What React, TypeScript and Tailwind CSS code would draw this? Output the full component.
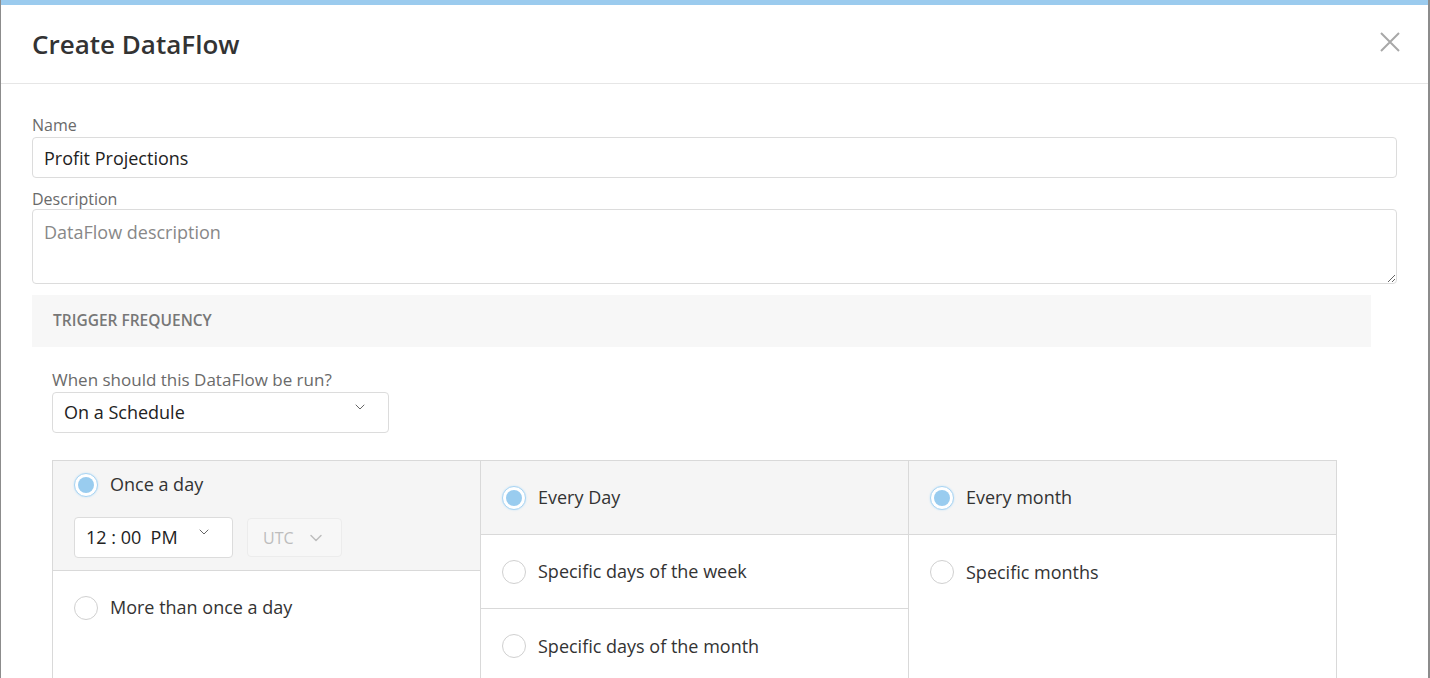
import { ChevronDown } from "lucide-react";

const Radio = ({ checked }: { checked?: boolean }) => (
    <span
        className={`flex h-6 w-6 shrink-0 items-center justify-center rounded-full border bg-white ${checked ? "border-[#a9d4f2] shadow-[0_0_2px_#bfe0f7]" : "border-[#d0d0d0]"}`}
    >
        {checked && <span className="h-4 w-4 rounded-full bg-[#99ccef]" />}
    </span>
);

const Option = ({ label, checked }: { label: string; checked?: boolean }) => (
    <label className="flex items-center gap-3 text-[18px] leading-[27px] text-[#333]">
        <Radio checked={checked} />
        <span>{label}</span>
    </label>
);

export default function App() {
    return (
        <div className="flex h-[678px] overflow-hidden bg-[#8c8c8c] pl-[1px] pr-[2px] font-['Open_Sans',sans-serif]">
            <div className="flex-1 border-t-[5px] border-[#9bcbee] bg-white">
                <header className="flex h-[79px] items-center justify-between border-b border-[#e6e6e6] pl-[31px] pr-[28px]">
                    <h1 className="text-[26px] font-semibold text-[#333]">Create DataFlow</h1>
                    <svg className="mb-1 h-5 w-5" viewBox="0 0 20 20" fill="none" stroke="#a8a8a8" strokeWidth="2">
                        <path d="M1 1 L19 19 M19 1 L1 19" />
                    </svg>
                </header>

                <div className="px-[31px] pt-[31px]">
                    <label className="block text-[16px] leading-5 text-[#6a6a6a]">Name</label>
                    <input
                        className="mt-[2px] block h-[41px] w-full rounded border border-[#dcdcdc] px-[11px] text-[18px] text-[#222] outline-none"
                        defaultValue="Profit Projections"
                    />
                    <label className="mt-[11px] block text-[16px] leading-5 text-[#6a6a6a]">Description</label>
                    <textarea
                        className="block h-[75px] w-full rounded border border-[#dcdcdc] px-[11px] py-[9px] text-[18px] text-[#222] outline-none placeholder:text-[#888]"
                        placeholder="DataFlow description"
                    />

                    <div className="mt-[11px] mr-[26px] flex h-[52px] items-center bg-[#f7f7f7] px-[21px] text-[15.5px] font-semibold text-[#777]">
                        TRIGGER FREQUENCY
                    </div>

                    <div className="pl-5 pr-[60px] pt-[22px]">
                        <label className="block text-[17px] leading-[22px] text-[#6a6a6a]">When should this DataFlow be run?</label>
                        <div className="mt-[1px] flex h-[41px] w-[337px] items-center justify-between rounded border border-[#dcdcdc] pl-[11px] pr-[20px] text-[18px] text-[#222]">
                            <span>On a Schedule</span>
                            <ChevronDown className="mb-3 h-4 w-4 text-[#666]" strokeWidth={1.5} />
                        </div>

                        <div className="mt-[27px] grid grid-cols-3 border-l border-t border-[#d9d9d9]">
                            <div className="border-r border-[#d9d9d9]">
                                <div className="h-[110px] border-b border-[#d9d9d9] bg-[#f5f5f5] px-[21px] pt-[10px]">
                                    <Option label="Once a day" checked />
                                    <div className="mt-[19px] flex items-center gap-[14px]">
                                        <div className="flex h-[41px] w-[159px] items-center justify-between rounded border border-[#dcdcdc] bg-white pl-[11px] pr-[20px] text-[18px] text-[#222]">
                                            <span>12 : 00&nbsp; PM</span>
                                            <ChevronDown className="mb-3 h-4 w-4 text-[#666]" strokeWidth={1.5} />
                                        </div>
                                        <div className="flex h-[39px] w-[95px] items-center gap-3 rounded border border-[#ececec] bg-[#f7f7f7] pl-[15px] text-[16px] text-[#bdbdbd]">
                                            <span>UTC</span>
                                            <ChevronDown className="h-5 w-5" strokeWidth={1.75} />
                                        </div>
                                    </div>
                                </div>
                                <div className="h-[120px] px-[21px] pt-[23px]">
                                    <Option label="More than once a day" />
                                </div>
                            </div>

                            <div className="border-r border-[#d9d9d9]">
                                <div className="flex h-[74px] items-center border-b border-[#d9d9d9] bg-[#f5f5f5] px-[21px]">
                                    <Option label="Every Day" checked />
                                </div>
                                <div className="flex h-[74px] items-center border-b border-[#d9d9d9] px-[21px]">
                                    <Option label="Specific days of the week" />
                                </div>
                                <div className="flex h-[74px] items-center px-[21px]">
                                    <Option label="Specific days of the month" />
                                </div>
                            </div>

                            <div className="border-r border-[#d9d9d9]">
                                <div className="flex h-[74px] items-center border-b border-[#d9d9d9] bg-[#f5f5f5] px-[21px]">
                                    <Option label="Every month" checked />
                                </div>
                                <div className="flex h-[74px] items-center px-[21px]">
                                    <Option label="Specific months" />
                                </div>
                            </div>
                        </div>
                    </div>
                </div>
            </div>
        </div>
    );
}
